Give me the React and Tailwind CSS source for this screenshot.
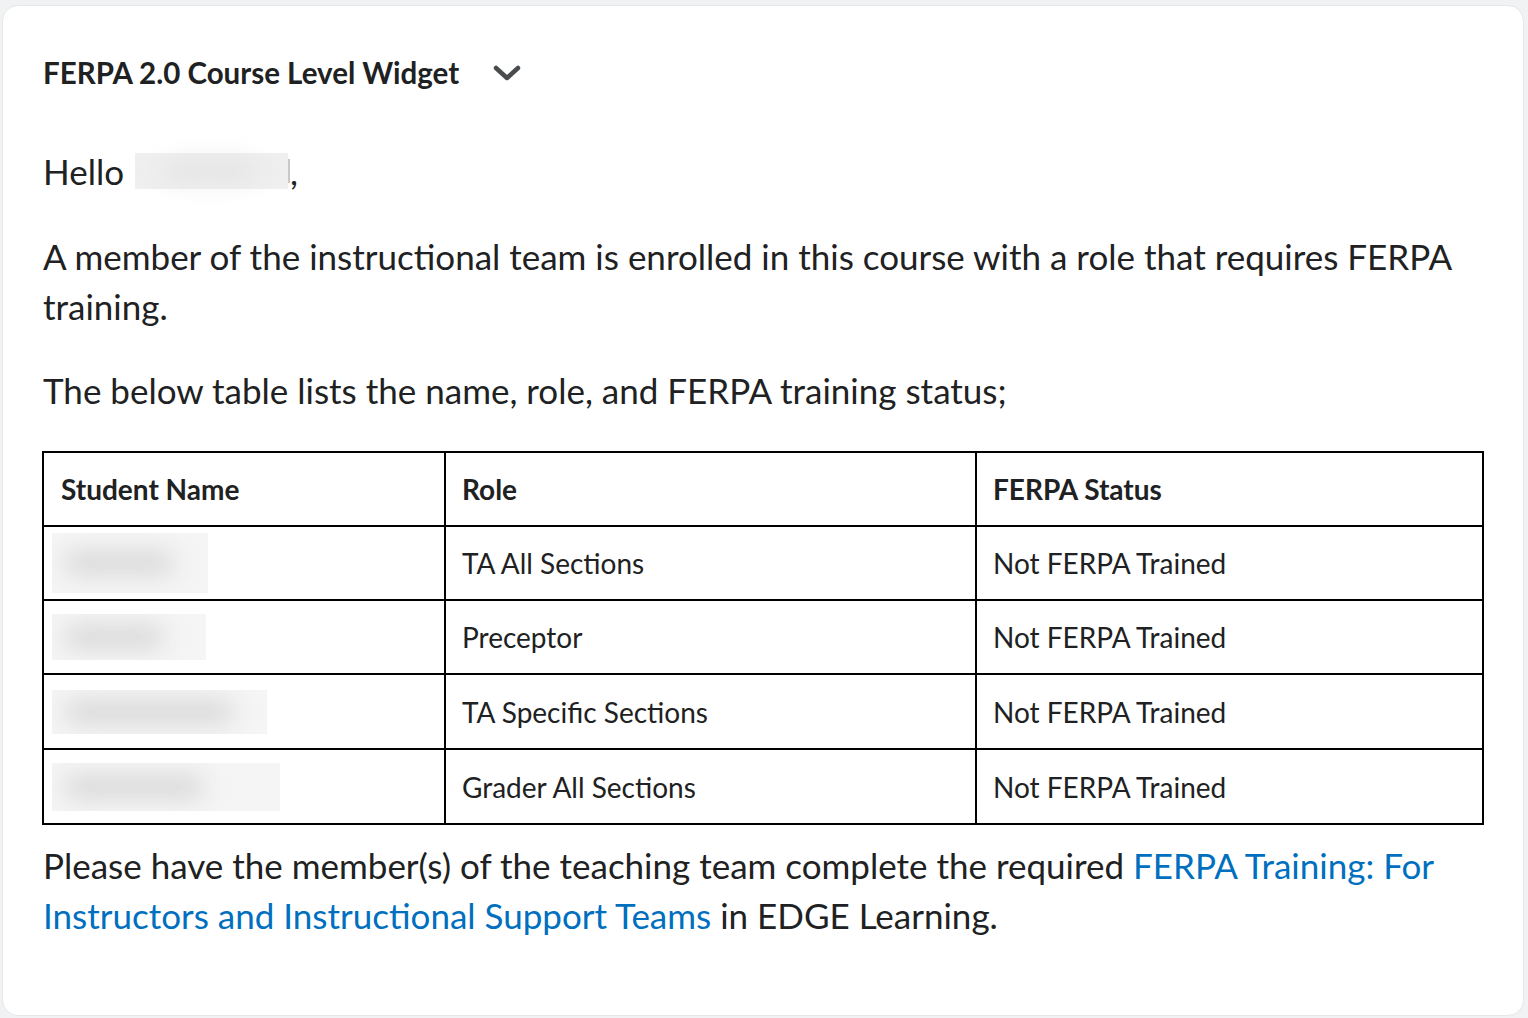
import React from 'react';

const ROWS = [
  { role: 'TA All Sections', status: 'Not FERPA Trained', blur: 'w-[156px] h-[60px]', blob: 'w-[110px]', h: 'h-[74px]' },
  { role: 'Preceptor', status: 'Not FERPA Trained', blur: 'w-[154px] h-[46px]', blob: 'w-[100px]', h: 'h-[74px]' },
  { role: 'TA Specific Sections', status: 'Not FERPA Trained', blur: 'w-[215px] h-[44px]', blob: 'w-[170px]', h: 'h-[75px]' },
  { role: 'Grader All Sections', status: 'Not FERPA Trained', blur: 'w-[228px] h-[48px]', blob: 'w-[140px]', h: 'h-[75px]' },
];

function Redacted({ size, blob }) {
  // blurred name placeholder
  return (
    <div className={`${size} bg-[#f5f5f5] flex items-center pl-3 overflow-hidden`}>
      <div className={`${blob} h-[22px] rounded-full bg-[#d6d6d6] blur-md`} />
    </div>
  );
}

function Chevron() {
  return (
    <svg width="28" height="18" viewBox="0 0 28 18" fill="none">
      <path d="M3 4 L14 14 L25 4" stroke="#494c4e" strokeWidth="4.5" strokeLinecap="round" strokeLinejoin="round" />
    </svg>
  );
}

export default function App() {
  return (
    <div className="min-h-screen bg-[#f1f2f4] pt-[5px] pl-[2px] pr-[4px] pb-[2px] font-['Lato',sans-serif] text-[#202122]">
      <div className="bg-white rounded-[16px] border border-[#e6e7e9] h-[1011px] pl-[40px] pr-[40px] pt-[50px]">
        <div className="flex items-center gap-[34px] h-[34px]">
          <h1 className="text-[29.5px] font-bold leading-[34px]">FERPA 2.0 Course Level Widget</h1>
          <Chevron />
        </div>

        <p className="mt-[56px] text-[35px] leading-[50px] flex items-center">
          Hello&nbsp;
          <span className="inline-flex items-center w-[153px] h-[36px] bg-[#efefef] ml-[2px]">
            <span className="ml-[30px] w-[90px] h-[18px] rounded-full bg-[#e2e2e2] blur-md" />
          </span>
          <span className="w-[2px] h-[24px] bg-[#c8c8c8]" />
          ,
        </p>

        <p className="mt-[35px] text-[35px] leading-[50px]">
          A member of the instructional team is enrolled in this course with a role that requires FERPA training.
        </p>

        <p className="mt-[34px] text-[35px] leading-[50px]">
          The below table lists the name, role, and FERPA training status;
        </p>

        <table className="mt-[36px] -ml-[1px] w-[1440px] table-fixed border-collapse border-2 border-black text-[28px]">
          <colgroup>
            <col className="w-[402px]" />
            <col className="w-[531px]" />
            <col className="w-[507px]" />
          </colgroup>
          <thead>
            <tr className="h-[74px]">
              <th className="border-2 border-black text-left font-bold pl-[17px]">Student Name</th>
              <th className="border-2 border-black text-left font-bold pl-[16px]">Role</th>
              <th className="border-2 border-black text-left font-bold pl-[16px]">FERPA Status</th>
            </tr>
          </thead>
          <tbody>
            {ROWS.map((r, i) => (
              <tr key={i} className={r.h}>
                <td className="border-2 border-black pl-[8px]">
                  <Redacted size={r.blur} blob={r.blob} />
                </td>
                <td className="border-2 border-black pl-[16px]">{r.role}</td>
                <td className="border-2 border-black pl-[16px]">{r.status}</td>
              </tr>
            ))}
          </tbody>
        </table>

        <p className="mt-[15px] text-[35px] leading-[50px]">
          Please have the member(s) of the teaching team complete the required{' '}
          <a href="#" className="text-[#006fbf]">FERPA Training: For Instructors and Instructional Support Teams</a>{' '}
          in EDGE Learning.
        </p>
      </div>
    </div>
  );
}
